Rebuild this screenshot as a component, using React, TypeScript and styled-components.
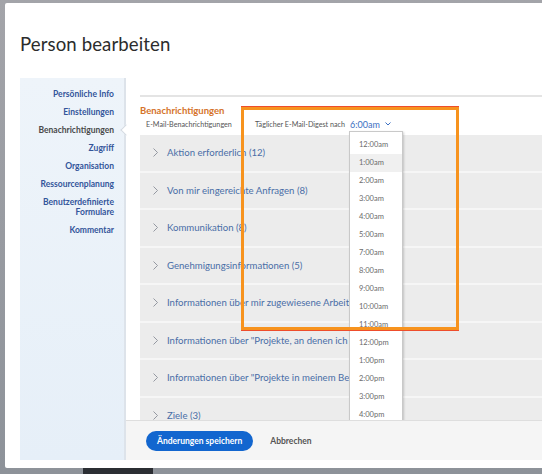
import React from "react";
import styled, { createGlobalStyle } from "styled-components";

const GlobalStyle = createGlobalStyle`
  html, body {
    margin: 0;
    padding: 0;
    background: #9a9da3;
    overflow: hidden;
    font-family: Lato, "Liberation Sans", sans-serif;
  }
`;

const Page = styled.div`
  position: relative;
  width: 542px;
  height: 474px;
  overflow: hidden;
  background: linear-gradient(#a3a4a9, #8d9299);
`;

const BottomStrip = styled.div`
  position: absolute;
  left: 83px;
  top: 468px;
  width: 70px;
  height: 6px;
  background: #2b2e33;
`;

const Modal = styled.div`
  position: absolute;
  left: 5px;
  top: 3px;
  width: 620px;
  height: 465px;
  background: #fff;
  border-radius: 2px;
  display: flex;
  flex-direction: column;
`;

const Title = styled.h1`
  margin: 0;
  height: 75px;
  box-sizing: border-box;
  padding: 30px 0 0 15px;
  font-size: 18.6px;
  font-weight: 400;
  color: #2c2c2c;
  letter-spacing: 0.1px;
`;

const Body = styled.div`
  display: flex;
  margin-left: 15px;
  height: 382px;
`;

const Sidebar = styled.nav`
  width: 106px;
  flex-shrink: 0;
  background: linear-gradient(#eef4fa, #e6eff8);
  border-right: 2px solid #dde3ea;
  padding-top: 7px;
  box-sizing: border-box;
`;

const NavItem = styled.div<{ $active?: boolean }>`
  position: relative;
  padding: 4px 10px 4px 4px;
  text-align: right;
  font-size: 8.5px;
  line-height: 10px;
  font-weight: 700;
  color: ${(p) => (p.$active ? "#4a4a4a" : "#33559a")};
  &::after {
    content: "";
    display: ${(p) => (p.$active ? "block" : "none")};
    position: absolute;
    right: -6px;
    top: 5px;
    width: 7px;
    height: 7px;
    background: #fff;
    border-left: 1px solid #d3dae2;
    border-bottom: 1px solid #d3dae2;
    transform: rotate(45deg);
  }
`;

const Main = styled.div`
  flex: 1;
  display: flex;
  flex-direction: column;
  min-width: 0;
`;

const Scroll = styled.div`
  position: relative;
  flex: 1;
  overflow: hidden;
  padding-left: 14px;
`;

const Divider = styled.div`
  margin-top: 17px;
  height: 2px;
  background: #e4e4e4;
`;

const SectionTitle = styled.div`
  margin-top: 8px;
  font-size: 9.5px;
  font-weight: 700;
  color: #d5732a;
  line-height: 11px;
`;

const OptionsRow = styled.div`
  display: flex;
  align-items: center;
  height: 16px;
  padding-left: 6px;
  font-size: 7.2px;
  color: #555;
`;

const OptionLabel = styled.span<{ $width?: number }>`
  width: ${(p) => (p.$width ? `${p.$width}px` : "auto")};
`;

const Select = styled.span`
  display: inline-flex;
  align-items: center;
  gap: 5px;
  margin-left: 5px;
  font-size: 9px;
  color: #3b6fc2;
`;

const List = styled.div`
  background: #ececec;
  margin-top: 3px;
`;

const Row = styled.div`
  display: flex;
  align-items: center;
  height: 35.5px;
  border-bottom: 2px solid #f6f6f6;
  padding-left: 13px;
  gap: 9px;
  font-size: 9.6px;
  color: #4a6ea7;
  white-space: nowrap;
`;

const Dropdown = styled.div`
  position: absolute;
  left: 223px;
  top: 53px;
  width: 52px;
  padding-top: 4px;
  background: #fff;
  border: 1px solid #c9c9c9;
  box-shadow: 1px 1px 2px rgba(0, 0, 0, 0.18);
`;

const DropItem = styled.div<{ $hover?: boolean }>`
  height: 18px;
  line-height: 18px;
  padding-left: 9px;
  font-size: 7.5px;
  color: #6a6a6a;
  background: ${(p) => (p.$hover ? "#f0f0f0" : "transparent")};
`;

const Footer = styled.div`
  height: 40px;
  flex-shrink: 0;
  box-sizing: border-box;
  background: #f5f5f5;
  border-top: 1px solid #dedede;
  display: flex;
  align-items: center;
  padding-left: 20px;
  gap: 17px;
`;

const PrimaryButton = styled.button`
  height: 20px;
  padding: 0 11px;
  border: none;
  border-radius: 10px;
  background: #1266cf;
  color: #fff;
  font-family: inherit;
  font-size: 8.5px;
  font-weight: 700;
`;

const TextButton = styled.button`
  border: none;
  background: none;
  padding: 0;
  color: #555;
  font-family: inherit;
  font-size: 8.5px;
  font-weight: 700;
`;

const Highlight = styled.div`
  position: absolute;
  left: 241px;
  top: 107px;
  width: 218px;
  height: 223px;
  box-sizing: border-box;
  border: 3px solid #f7931e;
  box-shadow: 0 -1px 0 #ee4d2c, 0 1px 0 #ee4d2c;
  pointer-events: none;
`;

const Chevron = ({ down }: { down?: boolean }) =>
  down ? (
    <svg width="6" height="4" viewBox="0 0 6 4">
      <path d="M0.5 0.5 L3 3 L5.5 0.5" fill="none" stroke="#3b6fc2" strokeWidth="1" />
    </svg>
  ) : (
    <svg width="5" height="9" viewBox="0 0 5 9">
      <path d="M0.5 0.5 L4.5 4.5 L0.5 8.5" fill="none" stroke="#8a8f98" strokeWidth="0.9" />
    </svg>
  );

const navItems = [
  "Persönliche Info",
  "Einstellungen",
  "Benachrichtigungen",
  "Zugriff",
  "Organisation",
  "Ressourcenplanung",
  "Benutzerdefinierte Formulare",
  "Kommentar",
];

// texts run on under the open dropdown, as in the screenshot
const rows = [
  "Aktion erforderlich (12)",
  "Von mir eingereichte Anfragen (8)",
  "Kommunikation (8)",
  "Genehmigungsinformationen (5)",
  "Informationen über mir zugewiesene Arbeit",
  'Informationen über "Projekte, an denen ich',
  'Informationen über "Projekte in meinem Bes',
  "Ziele (3)",
];

const times = [
  "12:00am", "1:00am", "2:00am", "3:00am", "4:00am", "5:00am", "7:00am", "8:00am",
  "9:00am", "10:00am", "11:00am", "12:00pm", "1:00pm", "2:00pm", "3:00pm", "4:00pm",
];

export default function App() {
  return (
    <Page>
      <GlobalStyle />
      <BottomStrip />
      <Modal>
        <Title>Person bearbeiten</Title>
        <Body>
          <Sidebar>
            {navItems.map((n) => (
              <NavItem key={n} $active={n === "Benachrichtigungen"}>
                {n === "Benutzerdefinierte Formulare" ? (
                  <>
                    Benutzerdefinierte
                    <br />
                    Formulare
                  </>
                ) : (
                  n
                )}
              </NavItem>
            ))}
          </Sidebar>
          <Main>
            <Scroll>
              <Divider />
              <SectionTitle>Benachrichtigungen</SectionTitle>
              <OptionsRow>
                <OptionLabel $width={109}>E-Mail-Benachrichtigungen</OptionLabel>
                <OptionLabel>Täglicher E-Mail-Digest nach</OptionLabel>
                <Select>
                  6:00am <Chevron down />
                </Select>
              </OptionsRow>
              <List>
                {rows.map((r) => (
                  <Row key={r}>
                    <Chevron />
                    {r}
                  </Row>
                ))}
              </List>
              <Dropdown>
                {times.map((t) => (
                  <DropItem key={t} $hover={t === "1:00am"}>
                    {t}
                  </DropItem>
                ))}
              </Dropdown>
            </Scroll>
            <Footer>
              <PrimaryButton>Änderungen speichern</PrimaryButton>
              <TextButton>Abbrechen</TextButton>
            </Footer>
          </Main>
        </Body>
      </Modal>
      <Highlight />
    </Page>
  );
}
